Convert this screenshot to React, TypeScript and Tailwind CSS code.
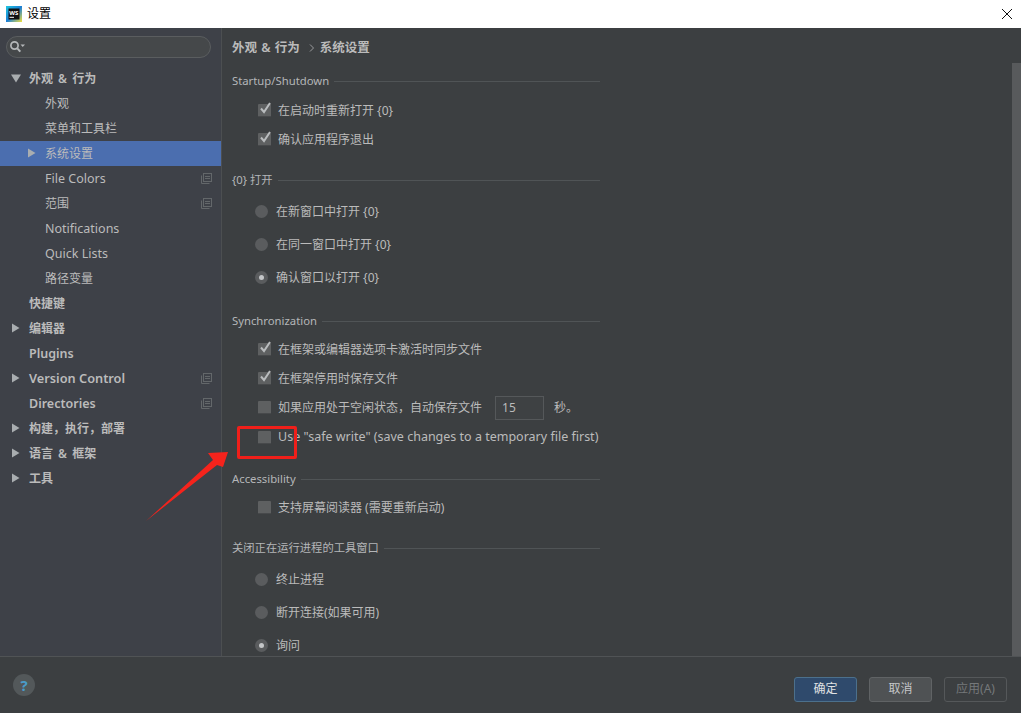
import React from "react";

function Arrow({ open, x }: { open?: boolean; x: string }) {
  return (
    <svg width="10" height="10" viewBox="0 0 10 10" className={`absolute top-[7px] ${x}`}>
      {open ? <path d="M0 1.5h10L5 9.5z" fill="#a9adb0" /> : <path d="M2 0.5l7.5 4.5-7.5 4.5z" fill="#a9adb0" />}
    </svg>
  );
}

function CopyIcon() {
  return (
    <svg width="11" height="11" viewBox="0 0 11 11" className="absolute left-[201px] top-[7px]" fill="none" stroke="#63676a" strokeWidth="1">
      <path d="M0.5 2.5v8h8" />
      <rect x="2.5" y="0.5" width="8" height="8" />
      <path d="M4 3.5h5M4 5.5h5" />
    </svg>
  );
}

type Item = { t: string; l: 1 | 2; a?: "o" | "c"; copy?: boolean; sel?: boolean; bold?: boolean; size: string };

const cjk = "text-[12px] [word-spacing:2px]";
const lat = "text-[12.5px]";

const items: Item[] = [
  { t: "外观 & 行为", l: 1, a: "o", bold: true, size: cjk },
  { t: "外观", l: 2, size: cjk },
  { t: "菜单和工具栏", l: 2, size: cjk },
  { t: "系统设置", l: 2, a: "c", sel: true, size: cjk },
  { t: "File Colors", l: 2, copy: true, size: lat },
  { t: "范围", l: 2, copy: true, size: cjk },
  { t: "Notifications", l: 2, size: lat },
  { t: "Quick Lists", l: 2, size: lat },
  { t: "路径变量", l: 2, size: cjk },
  { t: "快捷键", l: 1, bold: true, size: cjk },
  { t: "编辑器", l: 1, a: "c", bold: true, size: cjk },
  { t: "Plugins", l: 1, bold: true, size: lat },
  { t: "Version Control", l: 1, a: "c", copy: true, bold: true, size: "text-[12.75px]" },
  { t: "Directories", l: 1, copy: true, bold: true, size: lat },
  { t: "构建，执行，部署", l: 1, a: "c", bold: true, size: cjk },
  { t: "语言 & 框架", l: 1, a: "c", bold: true, size: cjk },
  { t: "工具", l: 1, a: "c", bold: true, size: cjk },
];

function TreeRow({ it }: { it: Item }) {
  return (
    <div className={`relative h-[25px] leading-[25px] text-[#bbbbbb] ${it.size} ${it.sel ? "bg-[#4b6eaf]" : ""} ${it.bold ? "font-semibold" : ""} ${it.l === 1 ? "pl-[29px]" : "pl-[45px]"}`}>
      {it.a && <Arrow open={it.a === "o"} x={it.l === 1 ? (it.a === "o" ? "left-[11px]" : "left-[10px]") : "left-[26px]"} />}
      {it.t}
      {it.copy && <CopyIcon />}
    </div>
  );
}

function Section({ title, h, mt, mb }: { title: string; h: string; mt: string; mb?: string }) {
  return (
    <div className={`flex items-center gap-[5px] w-[368px] text-[11.3px] text-[#b4b6b8] ${h} ${mt} ${mb ?? ""}`}>
      <span className="whitespace-nowrap">{title}</span>
      <div className="flex-1 h-px bg-[#505456]" />
    </div>
  );
}

function Check({ t, checked, h = "h-[29px]", children }: { t: string; checked?: boolean; h?: string; children?: React.ReactNode }) {
  return (
    <div className={`flex items-center pl-[26px] text-[12px] text-[#bbbbbb] whitespace-nowrap ${h}`}>
      <div className="relative w-[13px] h-[13px] bg-[#5e6061] border-b border-[#47494b] rounded-[1px] mr-[7px] shrink-0">
        {checked && (
          <svg width="15" height="15" viewBox="0 0 15 15" className="absolute left-0 -top-[3px]" fill="none" stroke="#b9bcbe" strokeWidth="2">
            <path d="M3 7.5l3 3.5 6-9" />
          </svg>
        )}
      </div>
      {children ?? t}
    </div>
  );
}

function Radio({ t, checked }: { t: string; checked?: boolean }) {
  return (
    <div className="flex items-center h-[33px] pl-[23px] text-[12px] text-[#bbbbbb]">
      <div className="w-[13px] h-[13px] rounded-full bg-[#5a5c5e] mr-[8px] flex items-center justify-center shrink-0">
        {checked && <div className="w-[5px] h-[5px] rounded-full bg-[#c4c6c8]" />}
      </div>
      {t}
    </div>
  );
}

export default function App() {
  return (
    <div className="relative w-[1021px] h-[713px] overflow-hidden flex flex-col bg-[#3c3f41] font-['Noto_Sans','Noto_Sans_CJK_SC',sans-serif]">
      {/* title bar */}
      <div className="h-[28px] bg-white flex items-center shrink-0 pl-[6px] pr-[8px]">
        <svg width="16" height="16" viewBox="0 0 16 16" className="mr-[5px]">
          <defs>
            <linearGradient id="ws" x1="0" y1="0" x2="1" y2="1">
              <stop offset="0" stopColor="#1fc8e0" />
              <stop offset="0.5" stopColor="#1b7fd6" />
              <stop offset="1" stopColor="#f5e23c" />
            </linearGradient>
          </defs>
          <rect x="0" y="0" width="16" height="16" fill="url(#ws)" />
          <rect x="2.5" y="2.5" width="11" height="11" fill="#111" />
          <text x="3.3" y="8.5" fontSize="6" fontWeight="700" fill="#fff">WS</text>
          <rect x="3.5" y="10.8" width="4.5" height="1" fill="#fff" />
        </svg>
        <span className="text-[12px] text-black">设置</span>
        <svg width="12" height="12" viewBox="0 0 12 12" className="ml-auto" stroke="#111" strokeWidth="1">
          <path d="M1 1l10 10M11 1L1 11" />
        </svg>
      </div>

      {/* body */}
      <div className="flex-1 min-h-0 flex">
        <aside className="w-[222px] shrink-0 bg-[#3e4148] border-r border-[#4c4f51] overflow-hidden">
          <div className="mt-[8px] ml-[6px] w-[205px] h-[22px] rounded-full bg-[#45484a] border border-[#5a5d5f] flex items-center pl-[2px]">
            <svg width="16" height="14" viewBox="0 0 16 14" fill="none">
              <circle cx="5.5" cy="5.5" r="3.6" stroke="#b5b8ba" strokeWidth="1.7" />
              <path d="M8.3 8.3l3 3.4" stroke="#b5b8ba" strokeWidth="2" />
              <path d="M11.5 4.5h4.5l-2.25 2.6z" fill="#b5b8ba" />
            </svg>
          </div>
          <div className="mt-[8px]">
            {items.map((it) => (
              <TreeRow key={it.t} it={it} />
            ))}
          </div>
        </aside>

        <main className="flex-1 min-w-0 pl-[10px] overflow-hidden">
          <div className="h-[38px] pt-[2px] flex items-center text-[12.5px] font-semibold text-[#bbbbbb]">
            <span className="[word-spacing:1px]">外观 &amp; 行为</span>
            <svg width="6" height="8" viewBox="0 0 6 8" className="ml-[9px] mr-[5px]" fill="none" stroke="#9a9c9e">
              <path d="M1 0.5L4.5 4 1 7.5" />
            </svg>
            <span>系统设置</span>
          </div>

          <Section title="Startup/Shutdown" h="h-[30px]" mt="mt-0" />
          <Check t="在启动时重新打开 {0}" checked />
          <Check t="确认应用程序退出" checked />

          <Section title="{0} 打开" h="h-[30px]" mt="mt-[11px]" />
          <Radio t="在新窗口中打开 {0}" />
          <Radio t="在同一窗口中打开 {0}" />
          <Radio t="确认窗口以打开 {0}" checked />

          <Section title="Synchronization" h="h-[26px]" mt="mt-[14px]" mb="mb-px" />
          <Check t="在框架或编辑器选项卡激活时同步文件" checked />
          <Check t="在框架停用时保存文件" checked />
          <Check t="">
            <span>如果应用处于空闲状态，自动保存文件</span>
            <div className="w-[49px] h-[24px] ml-[13px] mr-[10px] border border-[#55585a] bg-[#3e4143] pl-[6px] leading-[22px]">15</div>
            <span>秒。</span>
          </Check>
          <Check t="" h="h-[30px]">
            <span className="text-[12.5px]">{'Use "safe write" (save changes to a temporary file first)'}</span>
          </Check>

          <Section title="Accessibility" h="h-[26px]" mt="mt-[14px]" mb="mb-px" />
          <Check t="支持屏幕阅读器 (需要重新启动)" />

          <Section title="关闭正在运行进程的工具窗口" h="h-[26px]" mt="mt-[13px]" mb="mb-[2px]" />
          <Radio t="终止进程" />
          <Radio t="断开连接(如果可用)" />
          <Radio t="询问" checked />
        </main>

        <div className="w-[9px] shrink-0 pt-[35px]">
          <div className="h-full bg-[#585a5c]" />
        </div>
      </div>

      {/* footer */}
      <footer className="h-[57px] shrink-0 border-t border-[#505355] flex items-center pl-[13px] pr-[14px] pb-[1px]">
        <div className="w-[22px] h-[22px] rounded-full bg-[#53585a] flex items-center justify-center text-[15px] font-bold text-[#4a9bc9] mt-[1px]">?</div>
        <div className="ml-auto flex gap-[12px] mt-[9px] text-[12px]">
          <button className="w-[63px] h-[25px] rounded-[3px] border border-[#4c708c] bg-[#2f4a6c] text-[#e0e2e4]">确定</button>
          <button className="w-[63px] h-[25px] rounded-[3px] border border-[#606365] bg-[#4f5254] text-[#c4c6c8]">取消</button>
          <button className="w-[63px] h-[25px] rounded-[3px] border border-[#55585a] bg-[#3c3f41] text-[#75787a]">应用(A)</button>
        </div>
      </footer>

      {/* annotations */}
      <div className="absolute left-[237px] top-[426px] w-[60px] h-[33px] border-[3px] border-[#f01f1a] rounded-[2px]" />
      <svg width="100" height="90" viewBox="0 0 100 90" className="absolute left-[140px] top-[440px]">
        <path d="M6 81L73 20 68 13 88 12 83 27 77 25z" fill="#f5231c" />
      </svg>
    </div>
  );
}
